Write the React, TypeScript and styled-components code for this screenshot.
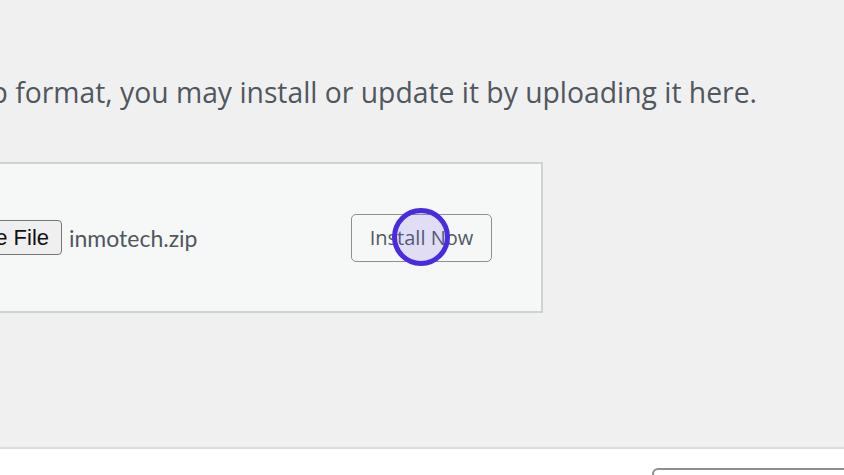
import React from "react";
import styled, { createGlobalStyle } from "styled-components";

const GlobalStyle = createGlobalStyle`
  html, body {
    margin: 0;
    padding: 0;
    background: #f0f0f1;
    overflow: hidden;
  }
`;

const Page = styled.div`
  display: flex;
  flex-direction: column;
  width: 844px;
  height: 475px;
  overflow: hidden;
`;

const Main = styled.div`
  flex: 1;
  display: flex;
  flex-direction: column;
  background: #f0f0f1;
`;

// 문장 오른쪽 끝을 고정하고 왼쪽으로 넘치게 함
const IntroRow = styled.div`
  display: flex;
  justify-content: flex-end;
  width: 757px;
  margin-top: 74px;
`;

const Intro = styled.p`
  margin: 0;
  white-space: nowrap;
  font-family: "Open Sans", "Noto Sans", sans-serif;
  font-size: 28.3px;
  line-height: 36px;
  color: #50575e;
`;

const UploadBox = styled.div`
  display: flex;
  align-items: center;
  box-sizing: border-box;
  width: 643px;
  height: 151px;
  margin-left: -100px;
  margin-top: 52px;
  border: 2px solid #d0d1d3;
  background: #f6f7f7;
`;

const Picker = styled.div`
  display: flex;
  justify-content: flex-end;
  width: 160px;
  flex-shrink: 0;
`;

const ChooseButton = styled.button`
  box-sizing: border-box;
  height: 35px;
  padding: 0 12px 0 8px;
  border: 1.5px solid #767676;
  border-radius: 4px;
  background: #efefef;
  color: #111;
  font-family: "Liberation Sans", Arial, sans-serif;
  font-size: 22px;
  white-space: nowrap;
`;

const FileName = styled.span`
  margin-left: 7px;
  font-family: Lato, "Open Sans", sans-serif;
  font-size: 23px;
  color: #50575e;
`;

const InstallWrap = styled.div`
  position: relative;
  margin-left: auto;
  margin-right: 49px;
`;

const InstallButton = styled.button`
  box-sizing: border-box;
  width: 141px;
  height: 48px;
  border: 1.5px solid #8c8f94;
  border-radius: 5px;
  background: #f6f7f7;
  color: #4f5a63;
  font-family: "Open Sans", "Noto Sans", sans-serif;
  font-size: 20px;
`;

// 클릭 위치 표시 (버튼 위에 겹침)
const ClickMarker = styled.span`
  position: absolute;
  left: 41px;
  top: -6px;
  box-sizing: border-box;
  width: 58px;
  height: 58px;
  border: 5px solid #4a2be0;
  border-radius: 50%;
  background: rgba(110, 90, 230, 0.16);
  pointer-events: none;
`;

const Footer = styled.div`
  height: 26px;
  border-top: 2px solid #dcdcde;
  background: #fff;
  display: flex;
`;

const SearchField = styled.div`
  margin-left: 652px;
  margin-top: 19px;
  flex: 1;
  margin-right: -20px;
  height: 30px;
  border: 2px solid #8c8f94;
  border-radius: 6px;
  background: #fff;
`;

const App: React.FC = () => {
  return (
    <Page>
      <GlobalStyle />
      <Main>
        <IntroRow>
          <Intro>If you have a plugin in a .zip format, you may install or update it by uploading it here.</Intro>
        </IntroRow>
        <UploadBox>
          <Picker>
            <ChooseButton type="button">Choose File</ChooseButton>
          </Picker>
          <FileName>inmotech.zip</FileName>
          <InstallWrap>
            <InstallButton type="button">Install Now</InstallButton>
            <ClickMarker />
          </InstallWrap>
        </UploadBox>
      </Main>
      <Footer>
        <SearchField />
      </Footer>
    </Page>
  );
};

export default App;
